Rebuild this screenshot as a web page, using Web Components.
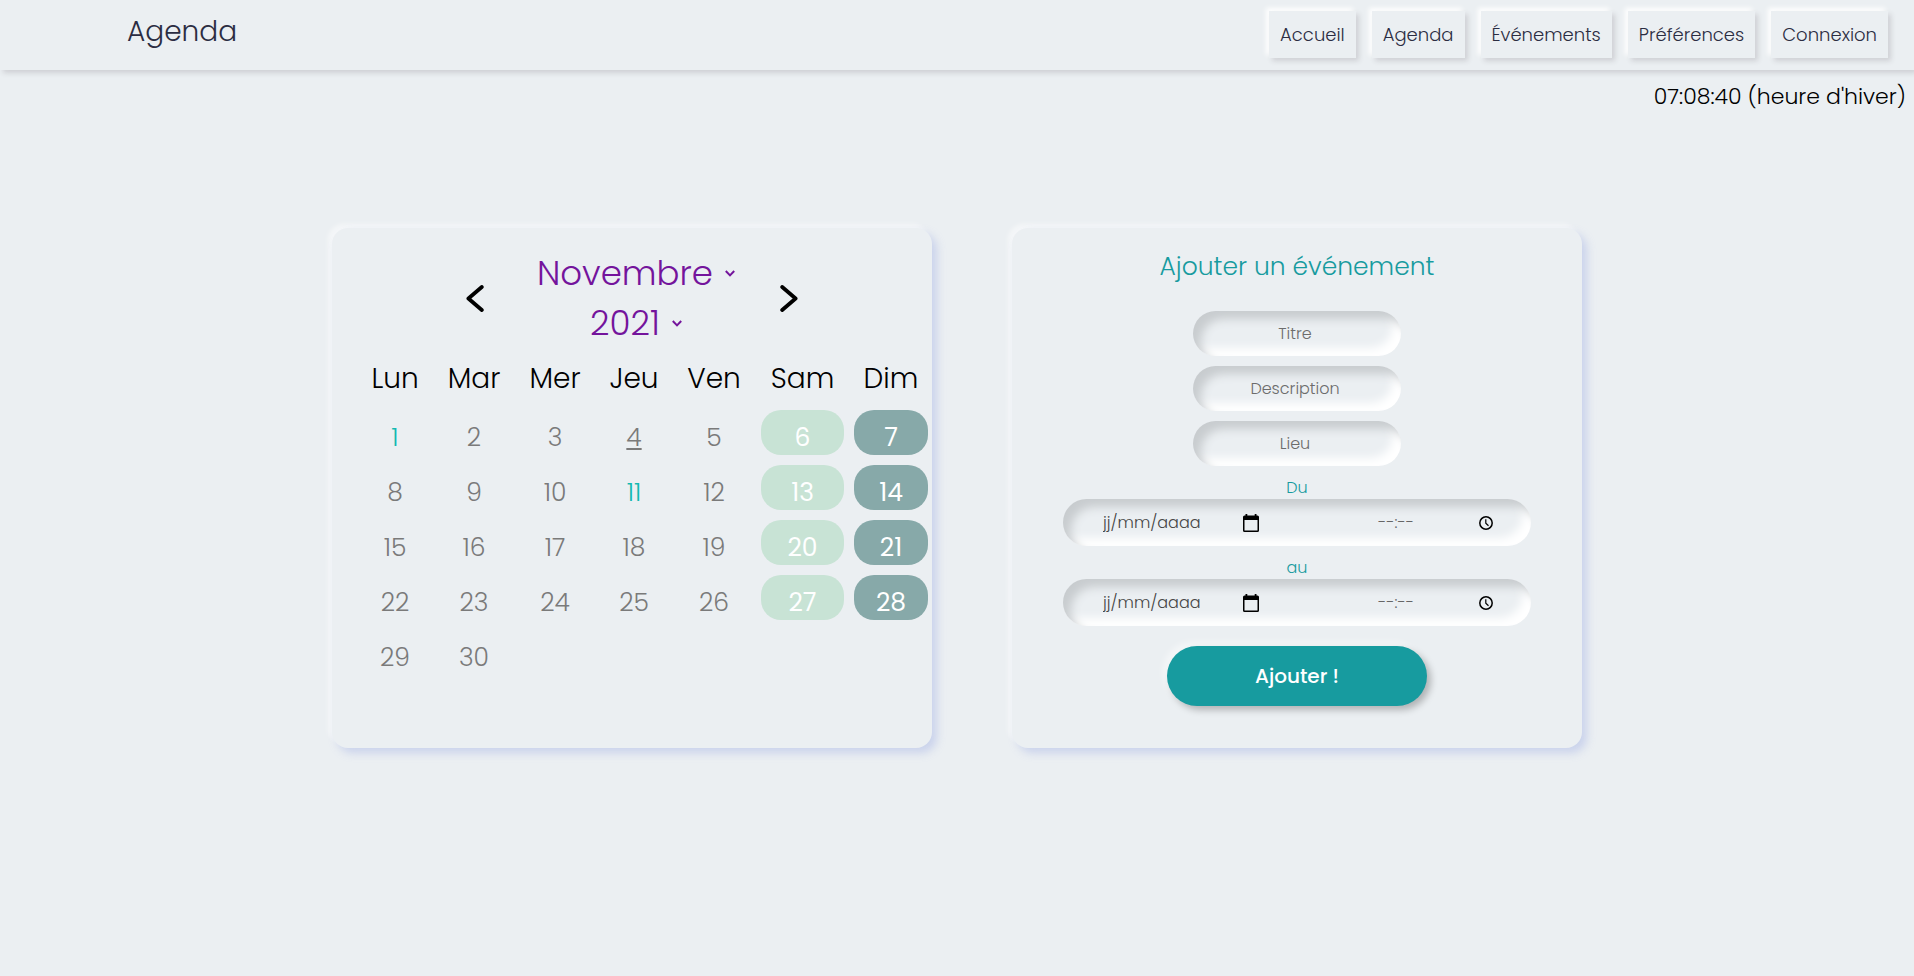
<!DOCTYPE html>
<html lang="fr">
<head>
<meta charset="utf-8">
<meta name="viewport" content="width=device-width, initial-scale=1">
<title>Agenda</title>
<style>
  body {
    margin: 0;
    background: #ebeff2;
    color: #000;
    font-family: Poppins, Inter, "Open Sans", sans-serif;
    font-weight: 300;
    --ink: #2b2d42;
    --teal: #179b9f;
    --surface: #ebeff2;
  }
  main {
    display: flex;
    flex-wrap: wrap;
    justify-content: center;
    gap: 80px;
    padding: 114px 20px 40px;
  }
  month-calendar { flex: 0 1 600px; }
  event-form { flex: 0 1 570px; }
</style>
</head>
<body>
<site-header>
  <nav-link href="#accueil">Accueil</nav-link>
  <nav-link href="#agenda">Agenda</nav-link>
  <nav-link href="#evenements">Événements</nav-link>
  <nav-link href="#preferences">Préférences</nav-link>
  <nav-link href="#connexion">Connexion</nav-link>
</site-header>
<live-clock>07:08:40 (heure d'hiver)</live-clock>
<main>
  <month-calendar today="4" holidays="1,11"></month-calendar>
  <event-form></event-form>
</main>

<template id="t-header">
  <style>
    :host { display: block; }
    header {
      display: flex;
      justify-content: space-between;
      gap: 24px;
      padding: 11px 26px 12px 127px;
      background: var(--surface);
      color: var(--ink);
      box-shadow: 3px 3px 5px rgba(60, 50, 60, .16);
    }
    h1 { margin: 0; font-size: 28px; line-height: 42px; font-weight: 300; }
    nav { display: flex; flex-wrap: wrap; gap: 16px; }
  </style>
  <header><h1>Agenda</h1><nav><slot></slot></nav></header>
</template>

<template id="t-link">
  <style>
    :host { display: block; }
    a {
      display: block;
      padding: 0 11px;
      font-size: 18px;
      line-height: 47px;
      color: var(--ink);
      text-decoration: none;
      background: var(--surface);
      box-shadow: 3px 3px 5px rgba(60, 50, 60, .16), -3px -3px 5px #fff;
    }
  </style>
  <a><slot></slot></a>
</template>

<template id="t-clock">
  <style>
    :host { display: block; padding: 10px 8px 0; text-align: right; font-size: 22px; line-height: 34px; }
  </style>
  <slot></slot>
</template>

<template id="t-card">
  <style>
    :host {
      display: block;
      box-sizing: border-box;
      height: 100%;
      border-radius: 16px;
      background: var(--surface);
      box-shadow: 5px 5px 9px rgba(150, 165, 225, .38), -4px -4px 5px rgba(255, 255, 255, .5);
    }
  </style>
  <slot></slot>
</template>

<template id="t-calendar">
  <style>
    :host { display: block; min-width: 0; }
    soft-card { padding: 20px 0 40px; }
    .head { display: flex; justify-content: center; align-items: center; gap: 44px; }
    .head button {
      display: flex;
      padding: 0;
      border: 0;
      background: none;
      color: #000;
      cursor: pointer;
    }
    .head svg { display: block; }
    .picks { display: flex; flex-direction: column; align-items: center; box-sizing: border-box; width: 208px; padding-left: 8px; }
    .pick { display: flex; align-items: center; gap: 12px; color: #74149c; }
    select {
      appearance: none;
      field-sizing: content;
      margin: 0;
      padding: 0;
      border: 0;
      background: none;
      color: inherit;
      font: inherit;
      font-size: 34px;
      line-height: 50px;
      height: 50px;
    }
    table { margin-left: 19px; border-spacing: 10px; table-layout: fixed; width: 587px; }
    th, td { padding: 0; text-align: center; font-weight: 300; }
    th { font-size: 28px; line-height: 42px; }
    td { box-sizing: border-box; height: 45px; padding-top: 11px; font-size: 25px; line-height: 34px; color: #7a7a7a; }
    .sam, .dim { color: #fff; border-radius: 20px; font-weight: 400; }
    .sam { background: #c8e3d5; }
    .dim { background: #87a9a9; }
    .holiday { color: #13b9b1; }
    .today { text-decoration: underline; }
  </style>
  <soft-card>
    <div class="head">
      <button type="button" aria-label="Mois précédent">
        <svg width="18" height="27" viewBox="0 0 18 27" fill="none" stroke="currentColor" stroke-width="3.8" stroke-linecap="round" stroke-linejoin="round"><path d="M15.8 2 2.4 13.5 15.8 25"/></svg>
      </button>
      <div class="picks">
        <span class="pick">
          <select aria-label="Mois"><option>Novembre</option></select>
          <svg width="10" height="7" viewBox="0 0 10 7" fill="none" stroke="currentColor" stroke-width="2"><path d="M.8 1 5 5.4 9.2 1"/></svg>
        </span>
        <span class="pick">
          <select aria-label="Année"><option>2021</option></select>
          <svg width="10" height="7" viewBox="0 0 10 7" fill="none" stroke="currentColor" stroke-width="2"><path d="M.8 1 5 5.4 9.2 1"/></svg>
        </span>
      </div>
      <button type="button" aria-label="Mois suivant">
        <svg width="18" height="27" viewBox="0 0 18 27" fill="none" stroke="currentColor" stroke-width="3.8" stroke-linecap="round" stroke-linejoin="round"><path d="M2.2 2 15.6 13.5 2.2 25"/></svg>
      </button>
    </div>
    <table>
      <colgroup><col width="68"><col width="70"><col width="72"><col width="66"><col width="74"><col width="83"><col width="74"></colgroup>
      <thead><tr><th>Lun</th><th>Mar</th><th>Mer</th><th>Jeu</th><th>Ven</th><th>Sam</th><th>Dim</th></tr></thead>
      <tbody></tbody>
    </table>
  </soft-card>
</template>

<template id="t-form">
  <style>
    :host { display: block; min-width: 0; }
    soft-card { padding: 20px 20px 42px; }
    form { display: flex; flex-direction: column; align-items: center; gap: 10px; }
    h2 { margin: 0 0 15px; font-size: 25px; line-height: 38px; font-weight: 300; color: var(--teal); }
    input.text {
      box-sizing: border-box;
      width: 208px;
      height: 45px;
      padding: 0 22px 0 18px;
      border: 0;
      border-radius: 23px;
      background: var(--surface);
      box-shadow: inset 8px 8px 10px #c8cccf, inset -8px -8px 10px #fff;
      font: inherit;
      font-size: 16px;
      text-align: center;
    }
    input::placeholder { color: #6c6c6c; }
    button {
      width: 260px;
      height: 60px;
      margin-top: 10px;
      padding: 0;
      border: 0;
      border-radius: 30px;
      background: var(--teal);
      color: #fff;
      font: inherit;
      font-size: 20px;
      font-weight: 500;
      box-shadow: 4px 4px 7px rgba(0, 0, 0, .25), -4px -4px 7px rgba(255, 255, 255, .5);
    }
  </style>
  <soft-card>
    <form>
      <h2>Ajouter un événement</h2>
      <input class="text" type="text" placeholder="Titre" aria-label="Titre">
      <input class="text" type="text" placeholder="Description" aria-label="Description">
      <input class="text" type="text" placeholder="Lieu" aria-label="Lieu">
      <date-time-field label="Du"></date-time-field>
      <date-time-field label="au"></date-time-field>
      <button type="button">Ajouter !</button>
    </form>
  </soft-card>
</template>

<template id="t-datetime">
  <style>
    :host { display: block; width: 468px; max-width: 100%; }
    label { display: block; text-align: center; font-size: 16px; line-height: 23px; color: var(--teal); }
    .field {
      display: flex;
      justify-content: space-between;
      box-sizing: border-box;
      height: 47px;
      padding: 0 38px 0 40px;
      border-radius: 24px;
      background: var(--surface);
      box-shadow: inset 8px 8px 10px #c8cccf, inset -8px -8px 10px #fff;
    }
    .part { display: flex; align-items: center; }
    input {
      box-sizing: border-box;
      width: 140px;
      padding: 0;
      border: 0;
      background: none;
      font: inherit;
      font-size: 16px;
    }
    input::placeholder { color: #444; }
    .time input { width: 101px; }
    .time input::placeholder { color: #666; }
    button { display: flex; padding: 0; border: 0; background: none; color: #000; }
  </style>
  <label for="date"></label>
  <div class="field">
    <span class="part">
      <input id="date" type="text" placeholder="jj/mm/aaaa">
      <button type="button" aria-label="Choisir la date">
        <svg width="16" height="18" viewBox="0 0 16 18"><path fill="currentColor" fill-rule="evenodd" d="M2.5 0h1.8v1.6h7.4V0h1.8v1.6h1Q16 1.6 16 3.1v13.4Q16 18 14.5 18h-13Q0 18 0 16.500V3.1Q0 1.6 1.5 1.6h1zM1.5 6v10.500h13V6z"/></svg>
      </button>
    </span>
    <span class="part time">
      <input type="text" placeholder="--:--" aria-label="Heure">
      <button type="button" aria-label="Choisir l'heure">
        <svg width="14" height="14" viewBox="0 0 14 14" fill="none" stroke="currentColor" stroke-width="1.5"><circle cx="7" cy="7" r="6.2"/><path stroke-width="1.2" d="M6.800 3.300v4l2.700 2.500"/></svg>
      </button>
    </span>
  </div>
</template>

<script>
  class TemplateElement extends HTMLElement {
    constructor() {
      super();
      const source = document.getElementById(this.constructor.template);
      this.attachShadow({ mode: 'open' }).append(source.content.cloneNode(true));
    }
  }

  class SiteHeader extends TemplateElement { static template = 't-header'; }
  class LiveClock extends TemplateElement { static template = 't-clock'; }
  class SoftCard extends TemplateElement { static template = 't-card'; }
  class EventForm extends TemplateElement { static template = 't-form'; }

  class NavLink extends TemplateElement {
    static template = 't-link';
    connectedCallback() {
      this.shadowRoot.querySelector('a').href = this.getAttribute('href');
    }
  }

  class DateTimeField extends TemplateElement {
    static template = 't-datetime';
    connectedCallback() {
      this.shadowRoot.querySelector('label').textContent = this.getAttribute('label');
    }
  }

  class MonthCalendar extends TemplateElement {
    static template = 't-calendar';
    connectedCallback() {
      const today = Number(this.getAttribute('today'));
      const holidays = this.getAttribute('holidays').split(',').map(Number);
      const body = this.shadowRoot.querySelector('tbody');
      let row;
      for (let day = 1; day <= 30; day++) {
        const column = (day - 1) % 7;
        if (column === 0) row = body.insertRow();
        const cell = row.insertCell();
        cell.textContent = day;
        if (column === 5) cell.classList.add('sam');
        if (column === 6) cell.classList.add('dim');
        if (day === today) cell.classList.add('today');
        if (holidays.includes(day)) cell.classList.add('holiday');
      }
    }
  }

  customElements.define('soft-card', SoftCard);
  customElements.define('nav-link', NavLink);
  customElements.define('site-header', SiteHeader);
  customElements.define('live-clock', LiveClock);
  customElements.define('date-time-field', DateTimeField);
  customElements.define('month-calendar', MonthCalendar);
  customElements.define('event-form', EventForm);
</script>
</body>
</html>
